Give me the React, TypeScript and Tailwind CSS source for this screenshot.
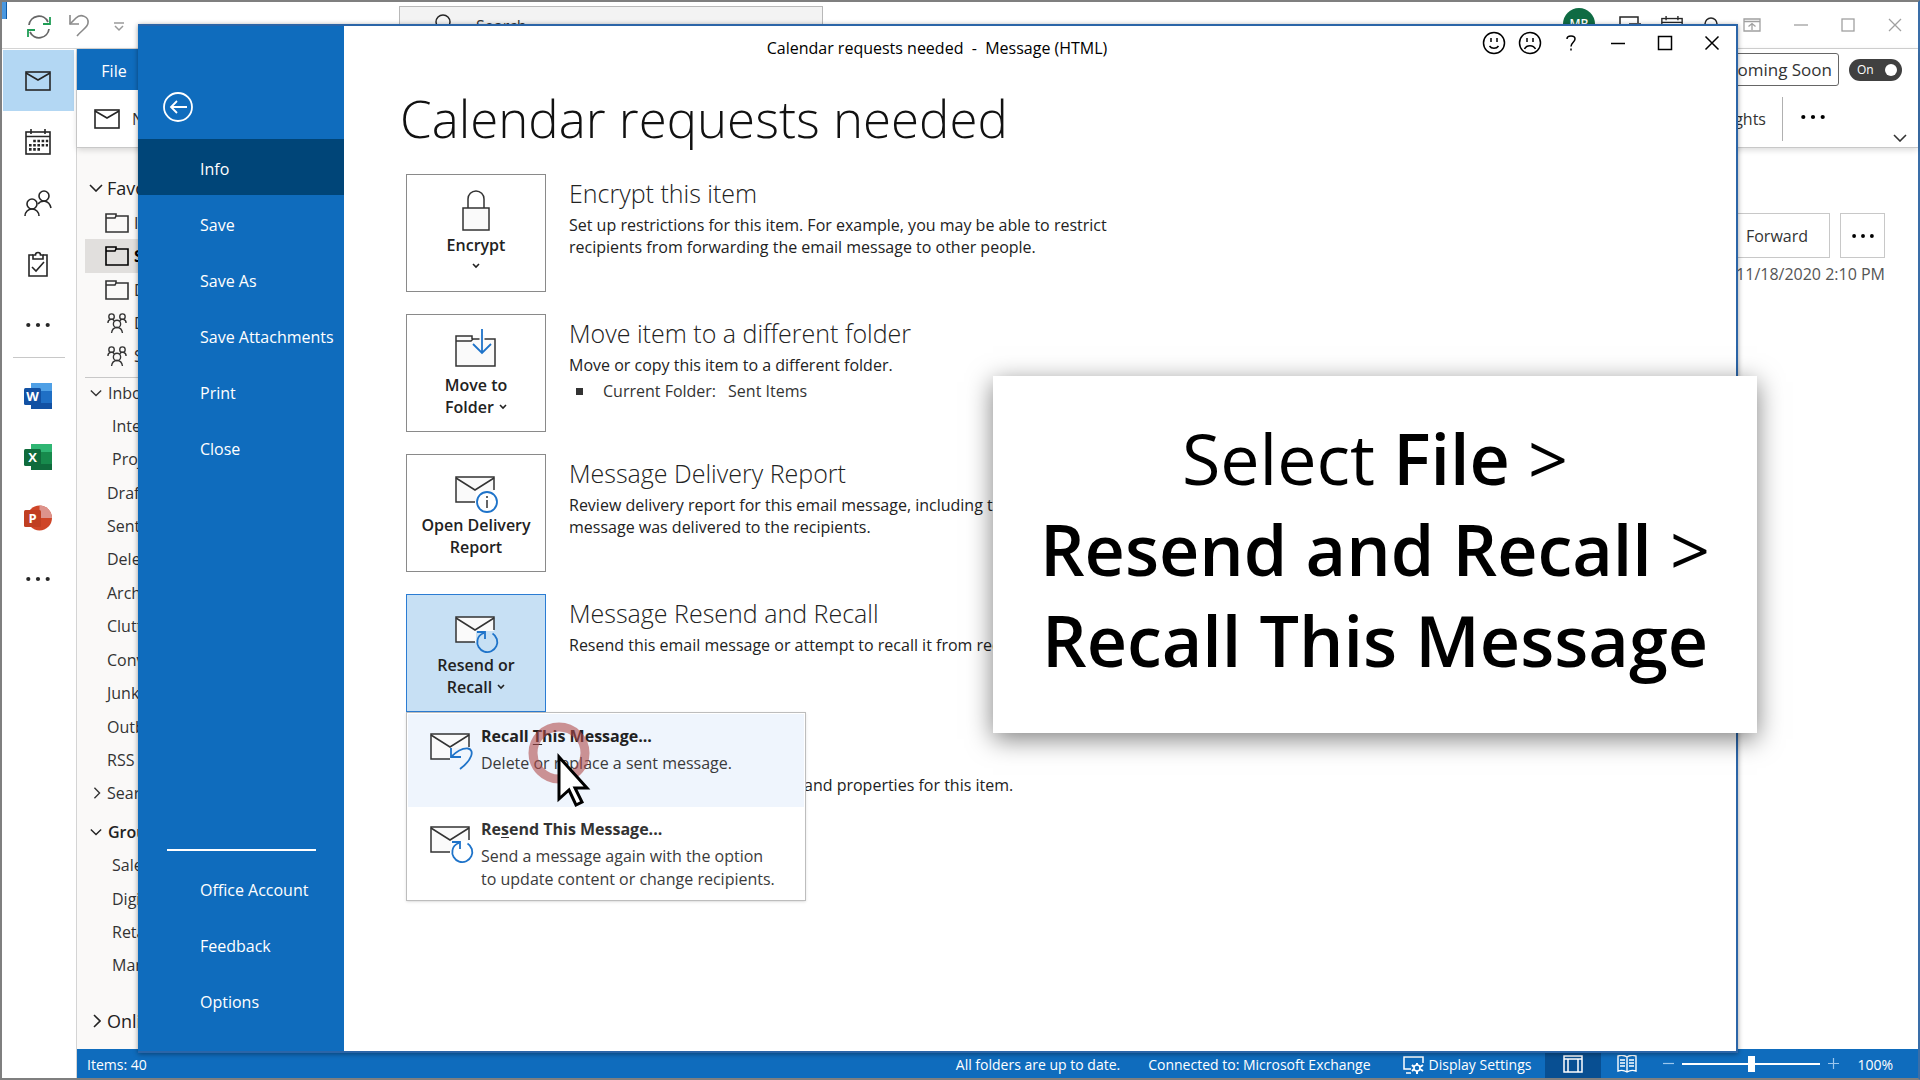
import React from 'react';

type IconProps = { className?: string };

const Envelope: React.FC<IconProps> = ({ className }) => (
  <svg viewBox="0 0 26 20" className={className} fill="none" stroke="currentColor" strokeWidth="1.6">
    <rect x="1" y="1" width="24" height="18" />
    <path d="M1 2l12 7 12-7" />
  </svg>
);

const CalendarIcon: React.FC<IconProps> = ({ className }) => (
  <svg viewBox="0 0 26 26" className={className} fill="none" stroke="currentColor" strokeWidth="1.6">
    <rect x="1" y="3" width="24" height="22" />
    <path d="M1 7.500h24M6 0v5M20 0v5" />
    <path d="M8.200 12h15M4 16.200h19M4 20.400h11" strokeWidth="2.6" strokeDasharray="2.6 1.600" />
  </svg>
);

const PeopleIcon: React.FC<IconProps> = ({ className }) => (
  <svg viewBox="0 0 28 26" className={className} fill="none" stroke="currentColor" strokeWidth="1.6">
    <circle cx="8" cy="14" r="5" />
    <path d="M1 26a7 7 0 0 1 14 0" />
    <circle cx="20" cy="6" r="5" />
    <path d="M14 14c3-4 11-4.500 13 4" />
  </svg>
);

const TasksIcon: React.FC<IconProps> = ({ className }) => (
  <svg viewBox="0 0 22 26" className={className} fill="none" stroke="currentColor" strokeWidth="1.6">
    <path d="M6 4H2v21h18V4h-4" />
    <path d="M6 8V4h2.500a2.500 2.500 0 0 1 5 0H16v4z" />
    <path d="M5 16l4 4 8-9" />
  </svg>
);

const Dots: React.FC<IconProps> = ({ className }) => (
  <svg viewBox="0 0 24 6" className={className} fill="currentColor">
    <circle cx="2.300" cy="3" r="2.100" />
    <circle cx="12" cy="3" r="2.100" />
    <circle cx="21.700" cy="3" r="2.100" />
  </svg>
);

const Folder: React.FC<IconProps> = ({ className }) => (
  <svg viewBox="0 0 24 20" className={className} fill="none" stroke="currentColor" strokeWidth="1.6">
    <path d="M1 1h10v2h12v16H1z" />
    <path d="M1 5h9l1-2" />
  </svg>
);

const GroupIcon: React.FC<IconProps> = ({ className }) => (
  <svg viewBox="0 0 22 22" className={className} fill="none" stroke="currentColor" strokeWidth="1.5">
    <circle cx="5" cy="4" r="3" />
    <circle cx="17" cy="4" r="3" />
    <circle cx="11" cy="12" r="4" />
    <path d="M1 11c0-5 6-5 7-2M21 11c0-5-6-5-7-2M5 22c1-8 11-8 12 0" />
  </svg>
);

const Chevron: React.FC<IconProps> = ({ className }) => (
  <svg viewBox="0 0 14 8" className={className} fill="none" stroke="currentColor" strokeWidth="1.6">
    <path d="M1 1l6 6 6-6" />
  </svg>
);

const ChevronRight: React.FC<IconProps> = ({ className }) => (
  <svg viewBox="0 0 8 14" className={className} fill="none" stroke="currentColor" strokeWidth="1.6">
    <path d="M1 1l6 6-6 6" />
  </svg>
);

const SmallChevron: React.FC<IconProps> = ({ className }) => (
  <svg viewBox="0 0 8 6" className={className} fill="none" stroke="currentColor" strokeWidth="1.6">
    <path d="M1 1l3 3 3-3" />
  </svg>
);

const LockArt = () => (
  <svg viewBox="0 0 48 48" className="size-12" fill="#fafafa" stroke="#333" strokeWidth="1.5">
    <path d="M16 22V13a8 8 0 0 1 16 0v9" fill="none" />
    <rect x="11" y="22" width="26" height="22" />
  </svg>
);

const FolderArt = () => (
  <svg viewBox="0 0 48 48" className="size-12" fill="#fafafa" stroke="#333" strokeWidth="1.5">
    <path d="M4 10h16v3h23v27H4z" />
    <path d="M4 15h15l2-2" />
    <path d="M30 9v10" stroke="#fafafa" strokeWidth="5" />
    <path d="M30 3v24M21 18l9 9 9-9" stroke="#1e73c9" fill="none" strokeWidth="1.8" />
  </svg>
);

const MailBody = () => (
  <>
    <path d="M4 11h38v14H24v11H4z" fill="#fafafa" stroke="none" />
    <path d="M23 36H4V11h38v13" fill="none" />
    <path d="M4 12l19 12 19-12" fill="none" />
  </>
);

const ReportArt = () => (
  <svg viewBox="0 0 48 48" className="size-12" stroke="#333" strokeWidth="1.5">
    <MailBody />
    <circle cx="35" cy="36" r="10" fill="#fff" stroke="#1e73c9" strokeWidth="1.8" />
    <path d="M35 34v8M35 30v2" />
  </svg>
);

const ResendArt = () => (
  <svg viewBox="0 0 48 48" className="size-12" stroke="#333" strokeWidth="1.5">
    <MailBody />
    <g fill="none" stroke="#1e73c9" strokeWidth="1.800">
      <path d="M40.500 27.500A10 10 0 1 1 25.500 34C26 31 29 28 32 27" />
      <path d="M25 26h8v7" />
    </g>
  </svg>
);

const RecallArt = () => (
  <svg viewBox="0 0 48 48" className="size-12" stroke="#333" strokeWidth="1.5">
    <MailBody />
    <g fill="none" stroke="#1e73c9" strokeWidth="1.800">
      <path d="M24 34C30 28 36 25 41 25.500C48 27 45 37 33 46" />
      <path d="M24 25v9h10" />
    </g>
  </svg>
);

const OfficeLogo: React.FC<{ letter: string; dark: string; light: string; base: string; round?: boolean }> = ({
  letter,
  dark,
  light,
  base,
  round,
}) => (
  <svg viewBox="0 0 28 26" className="h-[26px] w-7">
    {round ? (
      <>
        <circle cx="15.500" cy="13" r="12.500" fill={base} />
        <path d="M15.500 0.500A12.500 12.500 0 0 1 28 13H15.500z" fill={light} />
      </>
    ) : (
      <>
        <rect x="7" width="21" height="26" rx="1.500" fill={base} />
        <path d="M7 0h21v8H7z" fill={light} />
        <path d="M7 20h21v6H7z" fill={dark} />
      </>
    )}
    <rect x="0" y="5" width="17" height="17" rx="1.500" fill={dark} />
    <text x="8.500" y="18" textAnchor="middle" fill="#fff" fontSize="13" fontWeight="700" fontFamily="Open Sans, sans-serif">
      {letter}
    </text>
  </svg>
);

const RailButton: React.FC<{ label: string; active?: boolean; children: React.ReactNode }> = ({ label, active, children }) => (
  <button
    aria-label={label}
    className={`flex h-[61px] w-[71px] items-center justify-center pr-[2px] ${active ? 'bg-[#b3d7f3]' : ''}`}
  >
    {children}
  </button>
);

const Rail = () => (
  <nav className="flex w-[75px] shrink-0 flex-col border-r border-[#d4d4d4] pt-px pl-px text-[#262626]">
    <RailButton label="Mail" active>
      <Envelope className="h-5 w-[26px]" />
    </RailButton>
    <RailButton label="Calendar">
      <CalendarIcon className="size-[26px]" />
    </RailButton>
    <RailButton label="People">
      <PeopleIcon className="h-[26px] w-7" />
    </RailButton>
    <RailButton label="Tasks">
      <TasksIcon className="h-[26px] w-[22px]" />
    </RailButton>
    <RailButton label="More">
      <Dots className="h-[6px] w-6" />
    </RailButton>
    <hr className="mx-[10px] mt-[2px] mb-[7px] w-[52px] border-t border-[#c8c8c8]" />
    <RailButton label="Word">
      <OfficeLogo letter="W" dark="#1251a3" base="#1f6fc5" light="#4fa0e6" />
    </RailButton>
    <RailButton label="Excel">
      <OfficeLogo letter="X" dark="#0f6b3c" base="#178a4c" light="#2fb673" />
    </RailButton>
    <RailButton label="PowerPoint">
      <OfficeLogo letter="P" dark="#c03f22" base="#cf4527" light="#dd938c" round />
    </RailButton>
    <RailButton label="More apps">
      <Dots className="h-[6px] w-6" />
    </RailButton>
  </nav>
);

const favorites = [
  { name: 'Inbox', icon: Folder },
  { name: 'Sent', icon: Folder, selected: true },
  { name: 'Drafts', icon: Folder },
  { name: 'Digital', icon: GroupIcon },
  { name: 'Sales', icon: GroupIcon },
];

const folders = [
  { name: 'Interns', nested: true },
  { name: 'Projects', nested: true },
  { name: 'Drafts' },
  { name: 'Sent' },
  { name: 'Deleted' },
  { name: 'Archive' },
  { name: 'Clutter' },
  { name: 'Convers…' },
  { name: 'Junk' },
  { name: 'Outbox' },
  { name: 'RSS' },
];

const groups = ['Sales', 'Digital', 'Retail', 'Market'];

const FolderPane = () => (
  <aside className="w-[300px] shrink-0 overflow-hidden bg-[#faf9f8] pt-[23px] text-base whitespace-nowrap text-[#333]">
    <div className="flex h-[34px] items-center gap-1 pl-3 text-lg text-[#222]">
      <Chevron className="h-2 w-[14px]" />
      <span>Favorites</span>
    </div>
    <ul className="flex h-[168px] flex-col pt-px">
      {favorites.map(({ name, icon: Icon, selected }) => (
        <li
          key={name}
          className={`ml-2 flex flex-1 items-center gap-[5px] pl-5 ${selected ? 'bg-[#e1dfdd] font-bold text-black' : ''}`}
        >
          <Icon className="h-5 w-6" />
          <span>{name}</span>
        </li>
      ))}
    </ul>
    <div className="mt-1 ml-2 border-t border-[#c8c8c8]">
      <div className="flex h-[30px] items-center gap-[6px] pl-[5px]">
        <Chevron className="h-2 w-3" />
        <span>Inbox</span>
      </div>
    </div>
    <ul className="flex h-[402px] flex-col pt-px">
      {folders.map(({ name, nested }) => (
        <li key={name} className={`flex flex-1 items-center ${nested ? 'pl-[35px]' : 'pl-[30px]'}`}>
          {name}
        </li>
      ))}
      <li className="flex flex-1 items-center gap-[6px] pl-4">
        <ChevronRight className="h-3 w-2" />
        <span>Search</span>
      </li>
    </ul>
    <ul className="mt-[5px] flex h-[167px] flex-col">
      <li className="flex flex-1 items-center gap-[6px] pl-[13px] font-semibold text-[#222]">
        <Chevron className="h-2 w-3" />
        <span>Groups</span>
      </li>
      {groups.map((name) => (
        <li key={name} className="flex flex-1 items-center pl-[35px]">
          {name}
        </li>
      ))}
    </ul>
    <div className="mt-[22px] flex h-[34px] items-center gap-[6px] pl-4 text-lg text-[#222]">
      <ChevronRight className="h-[14px] w-2" />
      <span>Online</span>
    </div>
  </aside>
);

const TopBar = () => (
  <header className="flex h-[47px] shrink-0 items-start border-b border-[#d4d4d4] text-[#262626]">
    <div className="flex w-[397px] items-center gap-4 pt-[13px] pl-6">
      <button aria-label="Send and receive">
        <svg viewBox="0 0 26 24" className="h-6 w-[26px]" fill="none" stroke="#666" strokeWidth="1.800">
          <path d="M3 10A10 10 0 0 1 22 7M23 14A10 10 0 0 1 4 17" />
          <path d="M24 2v7h-7M2 22v-7h7" stroke="#1f9d55" />
        </svg>
      </button>
      <button aria-label="Undo" className="-mt-1 text-[#8a8a8a]">
        <svg viewBox="0 0 22 24" className="h-6 w-[22px]" fill="none" stroke="currentColor" strokeWidth="1.600">
          <path d="M2 2v9h9" />
          <path d="M2 11L8 5c5-5 13-1 12 5 0 4-6 7-11 13" />
        </svg>
      </button>
      <button aria-label="Customize toolbar" className="pl-[7px] text-[#9a9a9a]">
        <svg viewBox="0 0 12 10" className="h-[10px] w-3" fill="none" stroke="currentColor" strokeWidth="1.500">
          <path d="M1 1h10M2 4l4 4 4-4" />
        </svg>
      </button>
    </div>
    <label className="mt-1 flex h-[38px] w-[424px] items-center gap-6 border border-[#b8b8b8] bg-[#f3f3f3] pl-[34px]">
      <svg viewBox="0 0 18 22" className="h-[22px] w-[18px]" fill="none" stroke="currentColor" strokeWidth="1.500">
        <circle cx="9" cy="8" r="7" />
        <path d="M4 14l-4 6" />
      </svg>
      <input aria-label="Search" placeholder="Search" className="mt-px w-40 bg-transparent text-base outline-none placeholder:text-[#333]" />
    </label>
    <div className="ml-auto flex items-start gap-5 pr-4">
      <span className="mt-[6px] mr-1 flex size-8 items-center justify-center rounded-full bg-[#0f6b43] text-xs font-semibold text-white">MB</span>
      <svg viewBox="0 0 22 18" className="mt-[14px] h-[18px] w-[22px]" fill="none" stroke="currentColor" strokeWidth="1.500">
        <path d="M1 14V1h18v6M10 8h12" />
      </svg>
      <CalendarIcon className="mt-[14px] size-[22px]" />
      <svg viewBox="0 0 16 24" className="mt-[14px] mr-1 h-6 w-4" fill="none" stroke="currentColor" strokeWidth="1.500">
        <path d="M2 16V8a6 6 0 0 1 12 0v8" />
      </svg>
      <div className="flex items-center gap-[33px] pt-4 text-[#a0a0a0]">
        <button aria-label="Ribbon display options">
          <svg viewBox="0 0 18 14" className="h-[14px] w-[18px]" fill="none" stroke="currentColor" strokeWidth="1.300">
            <path d="M1 1h16v12H1zM1 3.500h16M9 12V5.500M5.500 8.500L9 5.500l3.500 3" />
          </svg>
        </button>
        <button aria-label="Minimize">
          <svg viewBox="0 0 14 14" className="size-[14px]" stroke="currentColor" strokeWidth="1.300">
            <path d="M0 7h14" />
          </svg>
        </button>
        <button aria-label="Maximize">
          <svg viewBox="0 0 14 14" className="size-[14px]" fill="none" stroke="currentColor" strokeWidth="1.300">
            <rect x="1" y="1" width="12" height="12" />
          </svg>
        </button>
        <button aria-label="Close">
          <svg viewBox="0 0 14 14" className="size-[14px]" stroke="currentColor" strokeWidth="1.300">
            <path d="M1 1l12 12M13 1L1 13" />
          </svg>
        </button>
      </div>
    </div>
  </header>
);

const Ribbon = () => (
  <div className="relative z-10 h-[99px] shrink-0 border-b border-[#c8c8c8] bg-white text-[#333] shadow-[0_2px_6px_rgba(0,0,0,0.15)]">
    <div className="flex h-[41px] items-center">
      <button className="h-full w-[74px] bg-[#0f6cbd] pt-[2px] text-base text-white">File</button>
      <div className="ml-auto flex items-center gap-[10px] pr-4">
        <button className="h-[33px] rounded-[3px] border border-[#666] px-[6px] text-[17px] whitespace-nowrap">Coming Soon</button>
        <button
          role="switch"
          aria-checked="true"
          className="flex h-[22px] w-[53px] items-center justify-between rounded-full bg-[#404040] pr-[5px] pl-2 text-xs text-white"
        >
          On
          <span className="size-3 rounded-full bg-white" />
        </button>
      </div>
    </div>
    <div className="flex h-[57px] items-center pl-[17px]">
      <button className="flex items-center gap-3 text-base">
        <Envelope className="h-5 w-[26px] text-[#262626]" />
        New
      </button>
      <div className="ml-auto flex h-full items-center">
        <button className="pt-px pr-4 text-base">Insights</button>
        <span className="h-11 border-l border-[#b0b0b0]" />
        <button aria-label="More commands" className="ml-[18px] pb-[4px] text-black">
          <Dots className="h-[6px] w-6" />
        </button>
        <button aria-label="Collapse ribbon" className="mr-[11px] ml-[68px] self-end pb-[5px]">
          <Chevron className="h-2 w-[14px]" />
        </button>
      </div>
    </div>
  </div>
);

const ReadingPane = () => (
  <main className="flex flex-1 flex-col items-end bg-white pt-[65px] pr-[33px]">
    <div className="flex gap-[10px] text-base text-[#333]">
      <button className="h-[45px] w-[110px] border border-[#c8c8c8] pt-px pl-1">Forward</button>
      <button aria-label="More actions" className="flex h-[45px] w-[45px] items-center justify-center border border-[#c8c8c8] text-black">
        <Dots className="h-[6px] w-[22px]" />
      </button>
    </div>
    <time className="mt-[5px] text-base leading-[22px] text-[#555]">Wed 11/18/2020 2:10 PM</time>
  </main>
);

const StatusBar = () => (
  <footer className="flex h-[29px] shrink-0 items-center bg-[#0f6cbd] pr-[25px] pl-[10px] text-sm whitespace-nowrap text-white">
    <span className="pt-[2px]">Items: 40</span>
    <div className="ml-auto flex h-full items-center">
      <span className="mr-7 pt-[2px]">All folders are up to date.</span>
      <span className="mr-8 pt-[2px]">Connected to: Microsoft Exchange</span>
      <button className="mr-[14px] flex items-center gap-[5px] pt-[2px]">
        <svg viewBox="0 0 21 18" className="h-[18px] w-[21px]" fill="none" stroke="currentColor" strokeWidth="1.500">
          <path d="M20 7V1H1v12h7M3 17h5" />
          <circle cx="14" cy="12" r="3" />
          <path d="M14 7v2M14 15v3M9 9l2 2M17 13l3 2M9 15l2-2M17 11l3-2" strokeWidth="2" />
        </svg>
        Display Settings
      </button>
      <button aria-label="Normal view" className="flex h-full w-14 items-center justify-center bg-[#084f92]">
        <svg viewBox="0 0 20 18" className="h-[18px] w-5" fill="none" stroke="currentColor" strokeWidth="1.500">
          <path d="M1 1h18v16H1zM1 4h18M5 4v13M15 4v13" />
        </svg>
      </button>
      <button aria-label="Reading view" className="ml-4">
        <svg viewBox="0 0 20 18" className="h-[18px] w-5" fill="none" stroke="currentColor" strokeWidth="1.400">
          <path d="M10 2C7 0 4 0 1 1v15c3-1 6-1 9 1 3-2 6-2 9-1V1c-3-1-6-1-9 1zM10 2v15" />
          <path d="M3 5h5M3 8h5M3 11h5M12 5h5M12 8h5M12 11h5" />
        </svg>
      </button>
      <button aria-label="Zoom out" className="ml-[26px]">
        <svg viewBox="0 0 11 11" className="size-[11px]" stroke="#9cc7ee" strokeWidth="1.200">
          <path d="M0 5.500h11" />
        </svg>
      </button>
      <input
        type="range"
        aria-label="Zoom"
        min={0}
        max={100}
        defaultValue={50}
        className="mx-2 h-4 w-[138px] appearance-none bg-transparent [&::-webkit-slider-runnable-track]:h-[2px] [&::-webkit-slider-runnable-track]:bg-white [&::-webkit-slider-thumb]:-mt-[7px] [&::-webkit-slider-thumb]:h-4 [&::-webkit-slider-thumb]:w-[7px] [&::-webkit-slider-thumb]:appearance-none [&::-webkit-slider-thumb]:bg-white"
      />
      <button aria-label="Zoom in">
        <svg viewBox="0 0 11 11" className="size-[11px]" stroke="#9cc7ee" strokeWidth="1.200">
          <path d="M0 5.500h11M5.500 0v11" />
        </svg>
      </button>
      <span className="ml-[18px] pt-[2px]">100%</span>
    </div>
  </footer>
);

const OutlookWindow = () => (
  <div className="flex h-full flex-col border-2 border-t-[#7f7f7f] border-r-[#3a6ea8] border-b-[#7f7f7f] border-l-[#7f7f7f] bg-white">
    <TopBar />
    <div className="flex min-h-0 flex-1">
      <Rail />
      <div className="flex min-w-0 flex-1 flex-col">
        <Ribbon />
        <div className="flex min-h-0 flex-1">
          <FolderPane />
          <ReadingPane />
        </div>
        <StatusBar />
      </div>
    </div>
  </div>
);

const navItems = ['Info', 'Save', 'Save As', 'Save Attachments', 'Print', 'Close'];
const footerItems = ['Office Account', 'Feedback', 'Options'];

const Backstage = () => (
  <nav className="flex w-[206px] shrink-0 flex-col bg-[#0f6cbd] pb-[22px] text-base text-white">
    <button aria-label="Back" className="mt-[65px] ml-6 size-8">
      <svg viewBox="0 0 32 32" className="size-8" fill="none" stroke="currentColor" strokeWidth="1.800">
        <circle cx="16" cy="16" r="14" />
        <path d="M25 16H9M15 10l-6 6 6 6" />
      </svg>
    </button>
    <div className="mt-4 flex flex-col">
      {navItems.map((item) => (
        <button
          key={item}
          className={`h-14 pt-[3px] pl-[62px] text-left whitespace-nowrap ${item === 'Info' ? 'bg-[#004578]' : ''}`}
        >
          {item}
        </button>
      ))}
    </div>
    <hr className="mt-auto mr-7 mb-[10px] ml-[29px] border-t-2 border-white" />
    {footerItems.map((item) => (
      <button key={item} className="h-14 pt-[2px] pl-[62px] text-left whitespace-nowrap">
        {item}
      </button>
    ))}
  </nav>
);

const captionButtons = [
  {
    label: 'Send a smile',
    width: 'w-9',
    art: (
      <>
        <circle cx="12" cy="12" r="10.500" />
        <path d="M9 7v4M15 7v4M7.500 15c2 3 7 3 9 0" />
      </>
    ),
  },
  {
    label: 'Send a frown',
    width: 'w-9',
    art: (
      <>
        <circle cx="12" cy="12" r="10.500" />
        <path d="M9 7v4M15 7v4M6.500 18c2-4.500 9-4.500 11 0" />
      </>
    ),
  },
  { label: 'Help', width: 'w-[46px]', art: <path d="M8 8c0-4 8-4 8 0 0 3-4 3.500-4 7.500M12 17.500v2" /> },
  { label: 'Minimize', width: 'w-[47px]', art: <path d="M5 12.500h14" /> },
  { label: 'Maximize', width: 'w-[47px]', art: <rect x="5.500" y="5.500" width="13" height="13" /> },
  { label: 'Close', width: 'w-[47px]', art: <path d="M5.500 5.500l13 13M18.500 5.500l-13 13" /> },
];

type Section = {
  label: string[];
  dropdown?: 'below' | 'inline';
  art: React.ReactNode;
  title: string;
  lines: string[];
  active?: boolean;
};

const sections: Section[] = [
  {
    label: ['Encrypt'],
    dropdown: 'below',
    art: <LockArt />,
    title: 'Encrypt this item',
    lines: [
      'Set up restrictions for this item. For example, you may be able to restrict',
      'recipients from forwarding the email message to other people.',
    ],
  },
  {
    label: ['Move to', 'Folder'],
    dropdown: 'inline',
    art: <FolderArt />,
    title: 'Move item to a different folder',
    lines: ['Move or copy this item to a different folder.'],
  },
  {
    label: ['Open Delivery', 'Report'],
    art: <ReportArt />,
    title: 'Message Delivery Report',
    lines: ['Review delivery report for this email message, including the', 'message was delivered to the recipients.'],
  },
  {
    label: ['Resend or', 'Recall'],
    dropdown: 'inline',
    art: <ResendArt />,
    title: 'Message Resend and Recall',
    lines: ['Resend this email message or attempt to recall it from recipients.'],
    active: true,
  },
];

const RecallMenu = () => (
  <div className="absolute top-full left-0 z-10 w-[400px] border border-[#bdbdbd] bg-white p-px text-base whitespace-nowrap text-[#3b3b3b] shadow-sm">
    <button className="flex h-[93px] w-full bg-[#eff5fd] pt-[9px] pl-[19px] text-left">
      <RecallArt />
      <span className="ml-[6px]">
        <span className="block leading-[26px] font-bold text-[#222]">
          Recall <u className="underline-offset-2">T</u>his Message...
        </span>
        <span className="block leading-7">Delete or replace a sent message.</span>
      </span>
    </button>
    <button className="flex h-[92px] w-full pt-[9px] pl-[19px] text-left">
      <ResendArt />
      <span className="ml-[6px]">
        <span className="block leading-[26px] font-bold text-[#333]">
          Re<u className="underline-offset-2">s</u>end This Message...
        </span>
        <span className="mt-[3px] block leading-[23px]">
          Send a message again with the option
          <br />
          to update content or change recipients.
        </span>
      </span>
    </button>
  </div>
);

const SectionRow: React.FC<{ section: Section }> = ({ section }) => (
  <section className="flex gap-[23px]">
    <div className="relative shrink-0">
      <button
        className={`flex h-[118px] w-[140px] flex-col items-center border pt-[11px] text-base leading-[22px] font-semibold text-[#222] ${
          section.active ? 'border-[#2b7cd3] bg-[#c7e0f4]' : 'border-[#8a8a8a] bg-white'
        }`}
      >
        {section.art}
        {section.label.map((line, i) => (
          <span key={line} className="flex items-center gap-[5px]">
            {line}
            {section.dropdown === 'inline' && i === 1 && <SmallChevron className="h-[6px] w-2" />}
          </span>
        ))}
        {section.dropdown === 'below' && <SmallChevron className="mt-[7px] h-[6px] w-2" />}
      </button>
      {section.active && <RecallMenu />}
    </div>
    <div className="whitespace-nowrap">
      <h2 className="mb-[2px] text-[25px] leading-[38px] font-light text-[#222]">{section.title}</h2>
      {section.lines.map((line) => (
        <p key={line} className="text-base leading-[22px] text-[#222]">
          {line}
        </p>
      ))}
      {section.title.startsWith('Move') && (
        <ul className="mt-1 flex items-center pl-[7px] text-base leading-[22px] text-[#333]">
          <li className="flex items-center">
            <span className="mr-5 size-[7px] bg-[#333]" />
            <span className="mr-3">Current Folder:</span>
            <span>Sent Items</span>
          </li>
        </ul>
      )}
    </div>
  </section>
);

const MessageWindow = () => (
  <div className="absolute top-6 right-[182px] bottom-[27px] left-[138px] z-20 flex border-t-2 border-r-2 border-b-2 border-[#2b65a8] bg-white shadow-[0_1px_5px_rgba(0,0,0,0.4)]">
    <Backstage />
    <div className="flex min-w-0 flex-1 flex-col">
      <header className="grid h-11 shrink-0 items-start text-black">
        <p className="col-start-1 row-start-1 pt-[10px] pr-[206px] text-center text-base leading-6">
          Calendar requests needed &nbsp;-&nbsp; Message (HTML)
        </p>
        <div className="col-start-1 row-start-1 mt-[5px] mr-px flex justify-self-end">
          {captionButtons.map(({ label, width, art }) => (
            <button key={label} aria-label={label} className={`flex justify-center ${width}`}>
              <svg viewBox="0 0 24 24" className="size-6" fill="none" stroke="currentColor" strokeWidth="1.500">
                {art}
              </svg>
            </button>
          ))}
        </div>
      </header>
      <h1 className="pl-14 text-[51px] leading-[96px] font-light whitespace-nowrap text-[#111]">Calendar requests needed</h1>
      <div className="flex flex-col gap-[22px] pt-[8px] pl-[62px]">
        {sections.map((section) => (
          <SectionRow key={section.title} section={section} />
        ))}
        <p className="pt-10 pl-[398px] text-base leading-[22px] whitespace-nowrap text-[#222]">and properties for this item.</p>
      </div>
    </div>
  </div>
);

const Callout = () => (
  <div className="absolute top-[376px] left-[993px] z-30 flex h-[357px] w-[764px] items-center justify-center bg-white pb-[10px] shadow-[0_6px_24px_rgba(0,0,0,0.5)]">
    <p className="text-center text-[70px] leading-[91px] whitespace-nowrap text-black">
      Select <b className="font-semibold">File</b> &gt;
      <br />
      <b className="font-semibold">Resend and Recall</b> &gt;
      <br />
      <b className="font-semibold">Recall This Message</b>
    </p>
  </div>
);

const Pointer = () => (
  <svg viewBox="0 0 64 88" className="pointer-events-none absolute top-[721px] left-[527px] z-30 h-[88px] w-16">
    <circle cx="32" cy="32" r="26" fill="none" stroke="#b04848" strokeOpacity="0.58" strokeWidth="9" />
    <path d="M32 36v42l10-9 7 15 6-3-7-14h12z" fill="#fff" stroke="#000" strokeWidth="3" />
  </svg>
);

export default function App() {
  return (
    <div className="relative h-screen overflow-hidden bg-white font-['Open_Sans','Noto_Sans',sans-serif]">
      <OutlookWindow />
      <span className="absolute top-[2px] left-[2px] h-[17px] w-[5px] border-r border-[#0f5ba8] bg-[#4a98e0]" />
      <MessageWindow />
      <Callout />
      <Pointer />
    </div>
  );
}
